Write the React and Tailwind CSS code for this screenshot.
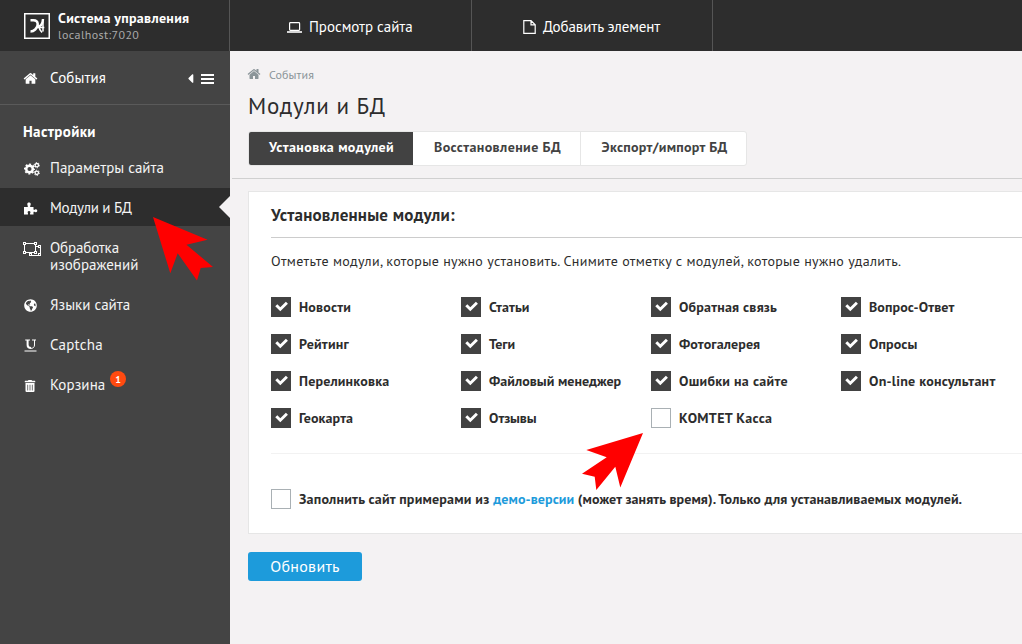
import { FaGlobeAmericas, FaTrashAlt, FaCaretLeft } from "react-icons/fa";

function HomeIcon({ className }) {
  return (
    <svg viewBox="0 0 1792 1792" fill="currentColor" className={className}>
      <path d="M1472 992v480q0 26-19 45t-45 19h-384v-384h-256v384h-384q-26 0-45-19t-19-45v-480q0-1 .5-3t.5-3l575-474 575 474q1 2 1 6zm223-69l-62 74q-8 9-21 11h-3q-13 0-21-7l-692-577-692 577q-12 8-24 7-13-2-21-11l-62-74q-8-10-7-23.5t11-21.5l719-599q32-26 76-26t76 26l244 204v-195q0-14 9-23t23-9h192q14 0 23 9t9 23v408l219 182q10 8 11 21.5t-7 23.5z" />
    </svg>
  );
}

function CogsIcon() {
  return (
    <svg viewBox="0 0 16 14" className="h-[14px] w-4" fill="none" stroke="#fff">
      <circle cx="5.500" cy="7" r="3.300" strokeWidth="2.500" />
      <circle cx="5.500" cy="7" r="4.800" strokeWidth="1.500" strokeDasharray="1.900 1.870" strokeDashoffset=".95" />
      <circle cx="12.800" cy="3.200" r="1.700" strokeWidth="1.300" />
      <circle cx="12.800" cy="3.200" r="2.600" strokeWidth="1" strokeDasharray="1.300 1.420" />
      <circle cx="12.800" cy="10.800" r="1.700" strokeWidth="1.300" />
      <circle cx="12.800" cy="10.800" r="2.600" strokeWidth="1" strokeDasharray="1.300 1.420" />
    </svg>
  );
}

function PuzzleIcon() {
  return (
    <svg viewBox="0 0 14 13" className="h-[13px] w-[14px]" fill="#fff">
      <path d="M0 5h3.600C4.500 4.300 3 3.200 3.300 1.700 3.600.100 6.400.100 6.700 1.700 7 3.200 5.400 4.300 6.400 5H9.500V7.600C10.300 8.500 11 7.300 12 7.300c1.700 0 1.700 3 0 3C11 10.300 10.300 9.100 9.500 10v2.500H6.300C5.400 11.800 6.700 11 6.400 9.700 6 8.600 4 8.600 3.700 9.700 3.400 11 4.700 11.800 3.800 12.500H0z" />
    </svg>
  );
}

function UngroupIcon() {
  return (
    <svg viewBox="0 0 19 15" className="h-[15px] w-[19px]" fill="none" stroke="#fff" shapeRendering="crispEdges">
      <path d="M2 1.500h10M1.500 2v8M2 10.500h10M12.500 2v8M13 4.500h4M17.500 5v8M7 13.500h10M7.500 11v2" />
      <path fill="#444" d="M.5.5h2v2h-2zM11.500.5h2v2h-2zM.5 9.500h2v2h-2zM11.500 9.500h2v2h-2zM15.500 3.500h2v2h-2zM15.500 11.500h2v2h-2zM6.500 11.500h2v2h-2z" />
    </svg>
  );
}

function UnderlineIcon() {
  return (
    <svg viewBox="0 0 13 13" className="h-[13px] w-[13px]" fill="none" stroke="#fff">
      <path d="M1.200 1h4.800M8 1h4M.5 12h12" />
      <path d="M3.600 1v5c0 2.200 1.200 3.100 3.400 3.100" strokeWidth="2" />
      <path d="M10.500 1v5c0 2.200-1.400 3.400-3.800 3.400" />
    </svg>
  );
}

function Logo() {
  return (
    <svg viewBox="0 0 26 26" className="h-[26px] w-[26px] shrink-0" fill="none" stroke="#fff">
      <rect x=".75" y=".75" width="24.500" height="24.500" strokeWidth="1.500" />
      <path d="M6.500 7.200h3c5.300 0 5.300 6 1.700 9.300-1.200 1.200-2.800 2-4.700 2" strokeWidth="2.500" />
      <path d="M19 6c-.3 4.500-2.500 7.700-6 7.700" strokeWidth="2.400" />
      <path d="M14.500 12.500c.6 3 1.500 5 3.500 7M19 6.500v12M14 14.500h6.300" strokeWidth="1.500" />
    </svg>
  );
}

function Item({ icon, label, active, wide, tr }) {
  return (
    <div className={"flex shrink-0 pl-[23px] " + (wide ? "h-[55px] " : "h-[38px] ") + (active ? "relative bg-[#2d2d2d]" : "")}>
      <div className={"flex h-[15px] w-[27px] items-center " + (wide ? "mt-[14px]" : "mt-[13px] pl-px")}>{icon}</div>
      <div className={"mt-[11px] w-[130px] text-[15px] leading-[17px] text-[#f4f4f4] " + tr}>{label}</div>
      {active && (
        <svg viewBox="0 0 11 22" className="absolute right-0 top-2 h-[22px] w-[11px]" fill="#f4f2f3">
          <path d="M11 0v22L0 11z" />
        </svg>
      )}
    </div>
  );
}

function Box({ checked }) {
  return checked ? (
    <span className="h-5 w-5 shrink-0 bg-[#424242]">
      <svg viewBox="0 0 20 20" className="h-5 w-5" fill="none" stroke="#fff" strokeWidth="2.900">
        <path d="M5.300 8.200l4 4.100 6.600-6.600" />
      </svg>
    </span>
  ) : (
    <span className="h-5 w-5 shrink-0 border border-[#a9b0b4] bg-white" />
  );
}

const modules = [
  ["Новости", "tracking-[0.2px]"],
  ["Статьи", "tracking-[0.1px]"],
  ["Обратная связь", "tracking-[0.2px]"],
  ["Вопрос-Ответ", "tracking-[0.1px]"],
  ["Рейтинг", "tracking-[0.2px]"],
  ["Теги", "tracking-normal"],
  ["Фотогалерея", "tracking-[0.1px]"],
  ["Опросы", "tracking-[0.1px]"],
  ["Перелинковка", "tracking-[0.2px]"],
  ["Файловый менеджер", "tracking-[0.03px]"],
  ["Ошибки на сайте", "tracking-[0.28px]"],
  ["On-line консультант", "tracking-[0.25px]"],
  ["Геокарта", "tracking-[0.1px]"],
  ["Отзывы", "tracking-[-0.1px]"],
  ["КОМТЕТ Касса", "tracking-[0.32px]"],
];

export default function App() {
  return (
    <div className="relative flex h-[644px] w-[1022px] flex-col overflow-hidden whitespace-nowrap bg-[#f4f2f3] font-['PT_Sans','Noto_Sans',sans-serif] text-[#2d2d2d]">
      <header className="flex h-[51px] shrink-0 bg-[#2d2d2d] text-white">
        <div className="flex w-[230px] border-r border-[#555] pl-6 pt-[13px]">
          <Logo />
          <div className="-mt-[3px] ml-2">
            <div className="text-[14px] font-semibold leading-[17px] tracking-[0.3px]">Система управления</div>
            <div className="text-[12px] leading-[15px] tracking-[0.4px] text-[#aaa]">localhost:7020</div>
          </div>
        </div>
        <div className="flex w-[242px] items-center border-r border-[#555] pl-[57px] pt-1 text-[15px]">
          <svg viewBox="0 0 15 11" className="mr-[7px] h-[11px] w-[15px]" fill="none" stroke="#fff" strokeWidth="1.200">
            <rect x="2.600" y=".6" width="10" height="7.800" rx=".8" />
            <path d="M0 10h15" strokeWidth="1.600" />
          </svg>
          <span className="tracking-[-0.04px]">Просмотр сайта</span>
        </div>
        <div className="flex w-[241px] items-center border-r border-[#555] pl-[51px] pt-1 text-[15px]">
          <svg viewBox="0 0 13 14" className="-mt-0.5 mr-[7px] h-[14px] w-[13px]" fill="none" stroke="#fff" strokeWidth="1.200">
            <path d="M.8.600h7.200l4.200 4.200v8.600H.8zM8 .6v4.200h4.200" />
          </svg>
          <span className="tracking-[-0.1px]">Добавить элемент</span>
        </div>
      </header>

      <div className="flex flex-1">
        <aside className="flex w-[230px] shrink-0 flex-col bg-[#444] text-white">
          <div className="flex h-[54px] shrink-0 items-center border-b border-[#5a5a5a] pl-[23px] pt-px">
            <HomeIcon className="mr-3 mt-px h-[15px] w-[15px]" />
            <span className="text-[15px] tracking-[0.1px]">События</span>
            <FaCaretLeft size={15} className="ml-auto mr-[3px]" />
            <div className="mr-4 mt-px flex w-[13px] flex-col gap-0.5">
              <i className="h-0.5 bg-white" />
              <i className="h-0.5 bg-white" />
              <i className="h-0.5 bg-white" />
            </div>
          </div>
          <div className="mt-[17px] pl-[23px] text-[15px] font-semibold leading-5 tracking-[0.35px]">Настройки</div>
          <div className="mt-1.5 flex flex-col gap-0.5 whitespace-normal">
            <Item icon={<CogsIcon />} label="Параметры сайта" />
            <Item active icon={<PuzzleIcon />} label="Модули и БД" tr="tracking-[-0.3px]" />
            <Item
              wide
              icon={<UngroupIcon />}
              label={
                <>
                  <span className="block tracking-[-0.15px]">Обработка</span>
                  <span className="block">изображений</span>
                </>
              }
            />
            <Item icon={<FaGlobeAmericas size={13} />} label="Языки сайта" />
            <Item icon={<UnderlineIcon />} label="Captcha" tr="tracking-[0.25px]" />
            <div className="relative">
              <Item icon={<FaTrashAlt size={12} />} label="Корзина" tr="tracking-[0.1px]" />
              <span className="absolute left-[110px] top-1.5 flex h-4 w-4 items-center justify-center rounded-full bg-[#ff4a10] text-[10px] font-bold">1</span>
            </div>
          </div>
        </aside>

        <main className="flex min-w-0 flex-1 flex-col">
          <div className="mt-4 flex h-4 items-center pl-[17px] text-[12px] text-[#8b9599]">
            <HomeIcon className="-mt-0.5 mr-2 h-[14px] w-[14px]" />
            <span className="tracking-[0.1px]">События</span>
          </div>
          <h1 className="mt-[7px] h-[33px] pl-[18px] text-[23px] leading-8 tracking-[0.7px]">Модули и БД</h1>
          <div className="ml-[18px] mt-2 flex h-[35px] self-start overflow-hidden rounded-[3px] border border-[#e6e6e6] bg-white text-[14px] font-semibold leading-[31px] tracking-[0.4px] text-[#424242]">
            <div className="w-[164px] bg-[#424242] pl-px text-center text-white">Установка модулей</div>
            <div className="w-[168px] border-r border-[#e6e6e6] pl-0.5 text-center">Восстановление БД</div>
            <div className="w-[165px] pl-0.5 text-center tracking-[0.3px]">Экспорт/импорт БД</div>
          </div>
          <div className="ml-0.5 mt-3 h-px bg-[#d0d0d0]" />
          <section className="ml-[18px] mt-3 h-[343px] border border-r-0 border-[#e6e6e6] bg-white pl-[22px]">
            <h2 className="h-[46px] border-b border-[#ccc] text-[17px] font-semibold leading-[46px] tracking-[0.22px]">Установленные модули:</h2>
            <p className="mt-[11px] h-6 text-[14px] leading-6 tracking-[0.32px]">Отметьте модули, которые нужно установить. Снимите отметку с модулей, которые нужно удалить.</p>
            <div className="mt-6 grid grid-cols-[repeat(4,190px)] gap-y-[17px]">
              {modules.map(([name, tr], i) => (
                <div key={name} className="flex h-5 items-center gap-2 text-[14px] font-semibold">
                  <Box checked={i !== 14} />
                  <span className={tr}>{name}</span>
                </div>
              ))}
            </div>
            <div className="mt-[25px] h-px bg-[#f2f2f2]" />
            <div className="mt-[35px] flex h-5 items-center gap-2 text-[14px] font-semibold">
              <Box />
              <span className="tracking-[0.09px]">
                <span className="tracking-[0.21px]">Заполнить сайт примерами из </span>
                <span className="text-[#1d9bdb]">демо-версии</span> (может занять время). Только для устанавливаемых модулей.
              </span>
            </div>
          </section>
          <button className="ml-[18px] mt-[18px] h-[29px] w-[114px] rounded-[3px] bg-[#1d9bdb] text-[16px] leading-[27px] tracking-[0.3px] text-white">Обновить</button>
        </main>
      </div>

      <svg viewBox="0 0 60 64" className="absolute left-[153px] top-[217px] h-[64px] w-[60px]" fill="red">
        <path d="M0 0 54.500 22.700 33.500 27.700 60 50 47.700 51 44 63.500 24.700 36.300 17.300 56.300z" />
      </svg>
      <svg viewBox="0 0 61 57" className="absolute left-[582px] top-[433px] h-[57px] w-[61px]" fill="red">
        <path d="M61 0 38.300 54.500 33.300 33.700 14.300 57 12.700 43.700 0 40.700 24.700 24.300 4.300 17z" />
      </svg>
    </div>
  );
}
